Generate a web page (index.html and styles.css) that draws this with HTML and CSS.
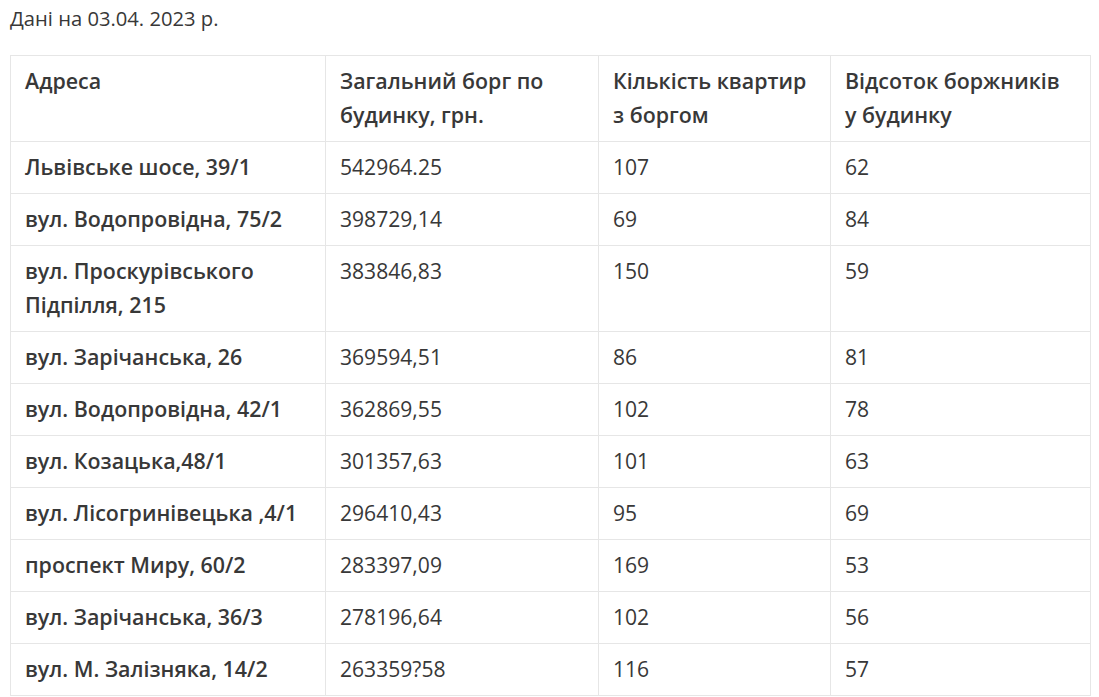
FILE: index.html
```html
<!DOCTYPE html>
<html lang="uk">
<head>
<meta charset="utf-8">
<link rel="stylesheet" href="styles.css">
</head>
<body>
<p class="note">Дані на 03.04. 2023 р.</p>
<table class="debt">
<colgroup>
<col class="c1"><col class="c2"><col class="c3"><col class="c4">
</colgroup>
<thead>
<tr><th>Адреса</th><th>Загальний борг по будинку, грн.</th><th>Кількість квартир з боргом</th><th>Відсоток боржників у будинку</th></tr>
</thead>
<tbody>
<tr><th>Львівське шосе, 39/1</th><td>542964.25</td><td>107</td><td>62</td></tr>
<tr><th>вул. Водопровідна, 75/2</th><td>398729,14</td><td>69</td><td>84</td></tr>
<tr><th>вул. Проскурівського Підпілля, 215</th><td>383846,83</td><td>150</td><td>59</td></tr>
<tr><th>вул. Зарічанська, 26</th><td>369594,51</td><td>86</td><td>81</td></tr>
<tr><th>вул. Водопровідна, 42/1</th><td>362869,55</td><td>102</td><td>78</td></tr>
<tr><th>вул. Козацька,48/1</th><td>301357,63</td><td>101</td><td>63</td></tr>
<tr><th>вул. Лісогринівецька ,4/1</th><td>296410,43</td><td>95</td><td>69</td></tr>
<tr><th>проспект Миру, 60/2</th><td>283397,09</td><td>169</td><td>53</td></tr>
<tr><th>вул. Зарічанська, 36/3</th><td>278196,64</td><td>102</td><td>56</td></tr>
<tr><th>вул. М. Залізняка, 14/2</th><td>263359?58</td><td>116</td><td>57</td></tr>
</tbody>
</table>
</body>
</html>
```
FILE: styles.css
```css
html, body {
  margin: 0;
  padding: 0;
  background: #fff;
}
body {
  padding: 0 10px;
  font-family: "Open Sans", "Noto Sans", sans-serif;
  color: #383838;
  font-size: 21px;
}
.note {
  margin: 0 0 19px;
  line-height: 36px;
  font-size: 20.2px;
}
.debt {
  border-collapse: collapse;
  width: 1080px;
  table-layout: fixed;
  border: 1px solid #e6e6e6;
}
.c1 { width: 315px; }
.c2 { width: 273px; }
.c3 { width: 232px; }
.c4 { width: 260px; }
.debt th, .debt td {
  border: 1px solid #e6e6e6;
  padding: 8px 14px 9px;
  line-height: 34px;
  text-align: left;
  vertical-align: top;
}
.debt th {
  font-weight: 600;
  font-size: 21.4px;
}
.debt td {
  font-weight: 400;
  font-size: 21.1px;
}
```
